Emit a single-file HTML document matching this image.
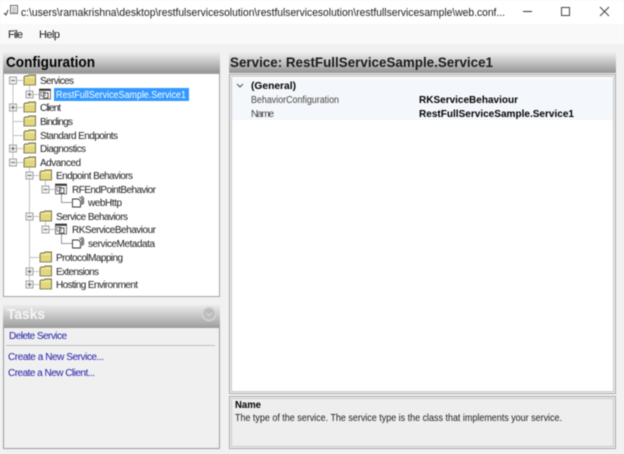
<!DOCTYPE html>
<html><head><meta charset="utf-8"><style>
html,body{margin:0;padding:0;background:#f1f1f1;width:624px;height:454px;overflow:hidden}
svg{display:block;filter:blur(.4px)}
text{font-family:"Liberation Sans",sans-serif;font-size:10px;fill:#1c1c1c}
.b{font-weight:bold;fill:#000}
.l{fill:#2220a8}
</style></head><body>
<svg width="624" height="454" viewBox="0 0 624 454" xmlns="http://www.w3.org/2000/svg">
<defs>
<linearGradient id="h" x1="0" y1="0" x2="0" y2="1"><stop offset="0" stop-color="#f0f0f0"/><stop offset=".2" stop-color="#dedede"/><stop offset="1" stop-color="#949494"/></linearGradient>
<linearGradient id="t" x1="0" y1="0" x2="0" y2="1"><stop offset="0" stop-color="#ececec"/><stop offset="1" stop-color="#a0a0a0"/></linearGradient>
<g id="f"><path d="M0 5V-3L1-4H4L5-5H11.500V5Z" fill="#e2d77c" stroke="#6e6a4c" stroke-width=".9"/><path d="M1-2.500H11" stroke="#f6efb4"/><path d="M0 5H11.500" stroke="#8a8560"/></g>
<g id="p"><rect x="-3.500" y="-3.500" width="7" height="7" fill="#f2f2f2" stroke="#a2a2a2"/><path d="M-2 0H2M0-2V2" stroke="#666"/></g>
<g id="m"><rect x="-3.500" y="-3.500" width="7" height="7" fill="#f2f2f2" stroke="#a2a2a2"/><path d="M-2 0H2" stroke="#666"/></g>
<g id="s" fill="none" stroke="#444" stroke-width=".9"><rect x="0" y="-5" width="11" height="10" stroke="#666"/><path d="M0-4H11" stroke="#222" stroke-width="1.500"/><rect x="4" y="-1" width="4.500" height="5" fill="#fff"/><rect x="1.500" y="-2" width="4" height="4" stroke="#777"/></g>
<g id="d" fill="#fff" stroke="#333" stroke-width=".9"><path d="M0-3H6L8-1V5H0Z"/><path d="M7-5L9.500-3V3M9-6L11-4V2" fill="none"/></g>
</defs>

<rect width="624" height="24" fill="#fff"/>
<rect y="24" width="624" height="20" fill="#f9f9f9"/>
<g fill="none" stroke="#666"><rect x="10.500" y="5.500" width="7" height="8"/><path d="M4 13L6 15L8 10" stroke="#333"/><path d="M12 8H16M12 10H16M12 12H16" stroke="#999"/></g>
<text x="21" y="16" style="font-size:11px" textLength="484" lengthAdjust="spacingAndGlyphs">c:\users\ramakrishna\desktop\restfulservicesolution\restfulservicesolution\restfullservicesample\web.conf...</text>
<path d="M523 11.500H532" stroke="#333"/>
<rect x="561.500" y="7.500" width="8" height="8" fill="none" stroke="#444"/>
<path d="M600 7L609 16M609 7L600 16" stroke="#444"/>
<text x="8" y="38" style="font-size:11px" textLength="15">File</text>
<text x="39" y="38" style="font-size:11px" textLength="21">Help</text>

<!-- Configuration panel -->
<rect x="3" y="52" width="217" height="21" fill="url(#h)"/>
<text x="6" y="67" class="b" style="font-size:15px" textLength="89" lengthAdjust="spacingAndGlyphs">Configuration</text>
<rect x="3.500" y="73.500" width="216" height="223" fill="#fff" stroke="#a5a5a5"/>

<g stroke="#c2c2c2" fill="none">
<path d="M13 84V162M13 80.500H23M13 107.500H23M13 121.500H23M13 135.500H23M13 148.500H23M13 162.500H23"/>
<path d="M29.500 84V94.500H39"/>
<path d="M29.500 166V284.500M29.500 175.500H39M29.500 216.500H39M29.500 257.500H39M29.500 271.500H39M29.500 284.500H39"/>
<path d="M45.500 179V189.500H55M45.500 220V229.500H55"/>
<path d="M61.500 193V202.500H72M61.500 234V243.500H72" stroke="#999"/>
</g>
<use href="#m" x="13" y="80.500"/><use href="#f" x="24" y="80"/>
<use href="#p" x="29.500" y="94.500"/><use href="#s" x="39.500" y="94"/>
<use href="#p" x="13" y="107.500"/><use href="#f" x="24" y="107"/>
<use href="#f" x="24" y="121"/><use href="#f" x="24" y="135"/>
<use href="#p" x="13" y="148.500"/><use href="#f" x="24" y="148"/>
<use href="#m" x="13" y="162.500"/><use href="#f" x="24" y="162"/>
<use href="#m" x="29.500" y="175.500"/><use href="#f" x="40" y="175"/>
<use href="#m" x="45.500" y="189.500"/><use href="#s" x="55.500" y="189"/>
<use href="#d" x="72.500" y="202"/>
<use href="#m" x="29.500" y="216.500"/><use href="#f" x="40" y="216"/>
<use href="#m" x="45.500" y="229.500"/><use href="#s" x="55.500" y="229"/>
<use href="#d" x="72.500" y="243"/>
<use href="#f" x="40" y="257"/>
<use href="#p" x="29.500" y="271.500"/><use href="#f" x="40" y="271"/>
<use href="#p" x="29.500" y="284.500"/><use href="#f" x="40" y="284"/>

<rect x="54" y="88" width="135" height="13" fill="#3399ff"/>
<text x="40" y="84" textLength="34">Services</text>
<text x="56" y="98" style="fill:#fff" textLength="130" lengthAdjust="spacingAndGlyphs">RestFullServiceSample.Service1</text>
<text x="40" y="111" textLength="21">Client</text>
<text x="40" y="125" textLength="33">Bindings</text>
<text x="40" y="139" textLength="78">Standard Endpoints</text>
<text x="40" y="152" textLength="46">Diagnostics</text>
<text x="40" y="166" textLength="41">Advanced</text>
<text x="56" y="179" textLength="77">Endpoint Behaviors</text>
<text x="72" y="193" textLength="84">RFEndPointBehavior</text>
<text x="88" y="206" textLength="34">webHttp</text>
<text x="56" y="220" textLength="72">Service Behaviors</text>
<text x="72" y="233" textLength="84">RKServiceBehaviour</text>
<text x="88" y="247" textLength="67">serviceMetadata</text>
<text x="56" y="261" textLength="67">ProtocolMapping</text>
<text x="56" y="275" textLength="43">Extensions</text>
<text x="56" y="288" textLength="82">Hosting Environment</text>

<!-- Tasks -->
<rect x="3" y="305" width="217" height="22" fill="url(#t)"/>
<text x="7" y="319" class="b" style="font-size:15px;fill:#f6f6f6" textLength="38" lengthAdjust="spacingAndGlyphs">Tasks</text>
<circle cx="209" cy="314" r="6.500" fill="#bdbdbd" stroke="#d4d4d4" stroke-width="1.500"/>
<path d="M206 313L209 315.500L212 313" fill="none" stroke="#d8d8d8"/>
<rect x="3.500" y="327.500" width="216" height="121" fill="#f0f0f0" stroke="#9c9c9c"/>
<text x="9" y="339" class="l" textLength="58">Delete Service</text>
<path d="M6 345.500H215" stroke="#bdbdbd"/>
<text x="8" y="360" class="l" textLength="96">Create a New Service...</text>
<text x="8" y="376" class="l" textLength="87">Create a New Client...</text>

<!-- Service panel -->
<rect x="229" y="52" width="387" height="21" fill="url(#h)"/>
<text x="230" y="67" class="b" style="font-size:14px;fill:#1a1a1a" textLength="263" lengthAdjust="spacingAndGlyphs">Service: RestFullServiceSample.Service1</text>
<rect x="229.500" y="74.500" width="386" height="319" fill="#f4f4f4" stroke="#a8a8a8"/>
<rect x="231.500" y="76.500" width="382" height="315" fill="#fff" stroke="#c8c8c8"/>
<rect x="232" y="79" width="381" height="41" fill="#f4f7fb"/>
<path d="M237 84L240 87L243 84" fill="none" stroke="#555"/>
<text x="251" y="89" class="b" textLength="45" lengthAdjust="spacingAndGlyphs">(General)</text>
<text x="251" y="103" style="fill:#444" textLength="88" lengthAdjust="spacingAndGlyphs">BehaviorConfiguration</text>
<text x="251" y="117" style="fill:#444" textLength="23">Name</text>
<text x="419" y="103" class="b" textLength="99" lengthAdjust="spacingAndGlyphs">RKServiceBehaviour</text>
<text x="419" y="117" class="b" textLength="155" lengthAdjust="spacingAndGlyphs">RestFullServiceSample.Service1</text>

<rect x="229.500" y="396.500" width="386" height="52" fill="#f4f4f4" stroke="#a8a8a8"/>
<rect x="231.500" y="398.500" width="382" height="48" fill="#eeeeee" stroke="#c8c8c8"/>
<text x="235" y="408" class="b" textLength="26" lengthAdjust="spacingAndGlyphs">Name</text>
<text x="235" y="421" textLength="327" lengthAdjust="spacingAndGlyphs">The type of the service. The service type is the class that implements your service.</text>
</svg>
</body></html>
